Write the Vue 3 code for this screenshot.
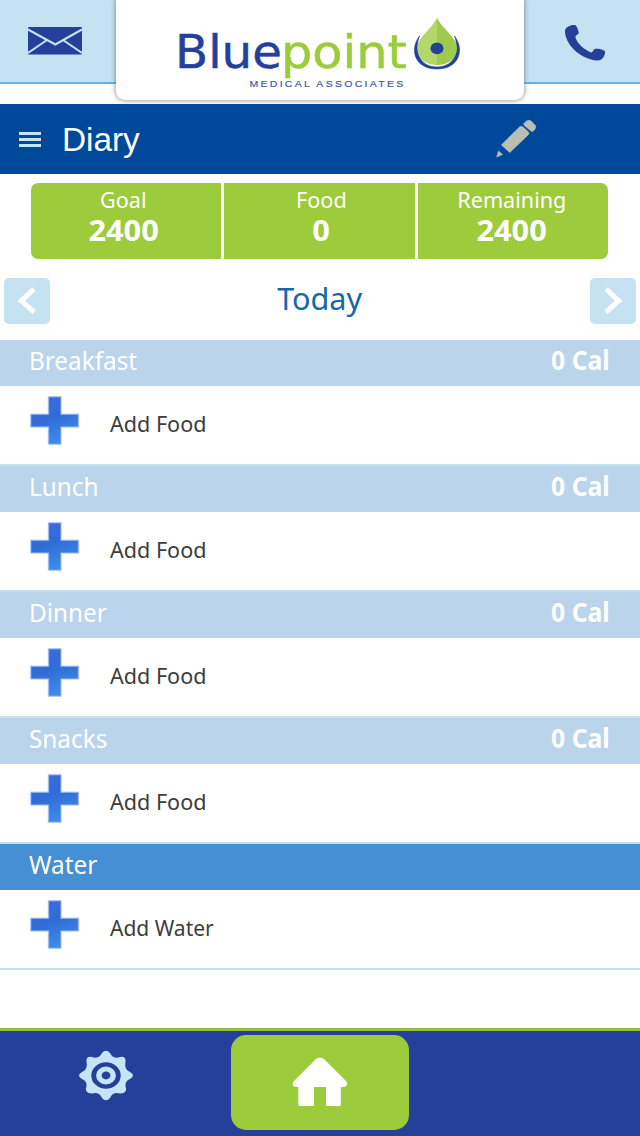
<script setup>
const stats = [
  { label: 'Goal', value: '2400', cls: 'goal' },
  { label: 'Food', value: '0', cls: 'food' },
  { label: 'Remaining', value: '2400', cls: 'remaining' },
]
const meals = [
  { name: 'Breakfast', total: '0 Cal', action: 'Add Food' },
  { name: 'Lunch', total: '0 Cal', action: 'Add Food' },
  { name: 'Dinner', total: '0 Cal', action: 'Add Food' },
  { name: 'Snacks', total: '0 Cal', action: 'Add Food' },
  { name: 'Water', total: '', action: 'Add Water', water: true },
]
</script>

<template>
  <div class="app">
    <header class="brand">
      <div class="side left">
        <svg width="54" height="28" viewBox="0 0 54 28">
          <rect width="54" height="27.5" rx="1" fill="#24409b" />
          <path d="M0 2.5 L27.3 17.5 L54 2.5 M0 26 L19 13 M54 26 L35 13" fill="none" stroke="#c5e2f3" stroke-width="2.1" />
        </svg>
      </div>
      <div class="card">
        <svg width="408" height="100" viewBox="116 0 408 100">
          <text x="175" y="67.7" font-size="47" textLength="107" lengthAdjust="spacingAndGlyphs" fill="#24409b" stroke="#24409b" stroke-width=".5" font-family="DejaVu Sans, sans-serif">Blue</text>
          <text x="281" y="67.7" font-size="47" textLength="126" lengthAdjust="spacingAndGlyphs" fill="#9ccb3b" stroke="#9ccb3b" stroke-width=".5" font-family="DejaVu Sans, sans-serif">point</text>
          <text x="249.5" y="86.8" font-size="8.8" textLength="156" lengthAdjust="spacingAndGlyphs" letter-spacing="1.9" fill="#3d55a5" stroke="#3d55a5" stroke-width=".15" font-family="Liberation Sans, Arial, sans-serif">MEDICAL ASSOCIATES</text>
          <path d="M419.500 36 C409 50 415 69 437 69 C459 69 465 50 454.500 36 C460 50 455 67 437 67 C419 67 414 50 419.500 36Z" fill="#24409b" stroke="#24409b" stroke-width=".6" />
          <path d="M437 17.500 C433 28 417.500 37 417.500 48 C417.500 59 426 65 437 65 Z" fill="#b2d86a" />
          <path d="M437 17.500 C441 28 457 37 457 48 C457 59 448 65 437 65 Z" fill="#9fcb4d" />
          <ellipse cx="437" cy="48.300" rx="6.500" ry="5.900" fill="#24409b" />
        </svg>
      </div>
      <div class="side right">
        <svg width="42" height="38" viewBox="564 24 42 38">
          <path d="M565 31 C565 27.500 570 25 574 25 C576.500 25 577 27 578 30 C579 32.500 579.300 34 577 34.800 C575.500 35.500 575 37 576 39 C579 45 584 49 590 52 C592 53 592.500 52 593.500 50 C595 48 599 48.500 603 50 C605.500 51 605.500 52.500 604.500 55 C603 59 600 61 596 60.500 C579 58 565 44 565 31Z" fill="#24409b" />
        </svg>
      </div>
    </header>

    <nav class="titlebar">
      <span class="menu"><i></i><i></i><i></i></span>
      <h1>Diary</h1>
      <svg class="pencil" width="42" height="40" viewBox="496 120 42 40">
        <g fill="#bdbdb3" stroke="#a9c6ce" stroke-width=".6">
          <path d="M501.300 146 L519.500 128 Q521.300 126.700 523 128 L528.300 132.800 Q529.500 134.300 528.300 135.700 L509.800 153.500 Z" />
          <path d="M524 124.300 L527 121.800 Q529 120.600 531 122 L535.200 126.300 Q536.300 128 535.200 129.700 L533.600 131.800 Q532.200 133 530.800 131.900 L524.300 126.500 Q523.200 125.300 524 124.300Z" />
          <path d="M498.500 152 L502.500 155.500 L496.700 158 Z" />
        </g>
      </svg>
    </nav>

    <section class="stats">
      <div v-for="s in stats" :key="s.label" class="stat" :class="s.cls">
        <span class="label">{{ s.label }}</span>
        <span class="value">{{ s.value }}</span>
      </div>
    </section>

    <section class="day">
      <button class="arrow" aria-label="Previous day">
        <svg width="46" height="46" viewBox="0 0 46 46"><path d="M30 11.200 L17.300 22.700 L30 34.200" fill="none" stroke="#fff" stroke-width="5" /></svg>
      </button>
      <span class="today">Today</span>
      <button class="arrow" aria-label="Next day">
        <svg width="46" height="46" viewBox="0 0 46 46"><path d="M16 11.200 L28.700 22.700 L16 34.200" fill="none" stroke="#fff" stroke-width="5" /></svg>
      </button>
    </section>

    <main>
      <section v-for="m in meals" :key="m.name" class="meal">
        <div class="meal-head" :class="{ water: m.water }">
          <span class="name">{{ m.name }}</span>
          <span class="total">{{ m.total }}</span>
        </div>
        <div class="meal-row">
          <svg class="plus" width="50" height="50" viewBox="0 0 50 50">
            <defs>
              <linearGradient id="plusFill" x1="0" y1="0" x2=".35" y2="1">
                <stop offset="0" stop-color="#3f6cdc" />
                <stop offset=".5" stop-color="#306bd6" />
                <stop offset="1" stop-color="#3d8ae8" />
              </linearGradient>
            </defs>
            <path d="M18.500 .8 H31 V18.300 H48.500 V31 H31 V48.300 H18.500 V31 H.8 V18.300 H18.500 Z" fill="url(#plusFill)" stroke="#9dbdf0" stroke-opacity=".65" stroke-width="1.500" stroke-linejoin="round" />
          </svg>
          <span class="action" :class="{ narrow: m.water }">{{ m.action }}</span>
        </div>
      </section>
    </main>

    <footer class="tabs">
      <div class="tab">
        <svg width="56" height="51" viewBox="-28 -25.500 56 51">
          <g transform="scale(1 .9)">
            <path d="M-4 -25 Q0 -30 4 -25 C6 -20 9 -19 14 -20.500 Q20 -22 19.500 -15 C18.500 -9 20 -6 24 -4 Q30 0 24 4 C20 6 18.500 9 20 14 Q21 20 14 20 C9 18.500 6 20 4 25 Q0 30 -4 25 C-6 20 -9 18.500 -14 20 Q-21 20 -20 14 C-18.500 9 -20 6 -24 4 Q-30 0 -24 -4 C-20 -6 -18.500 -9 -19.500 -15 Q-20 -22 -14 -20.500 C-9 -19 -6 -20 -4 -25Z" fill="#c5e4f5" />
            <circle r="12.300" fill="none" stroke="#24409b" stroke-width="4.800" />
            <circle r="4.400" fill="#24409b" />
          </g>
        </svg>
      </div>
      <div class="tab home">
        <svg width="56" height="50" viewBox="292 1057 56 50">
          <path d="M316 1059 Q320 1056.500 324 1059 L345.500 1080.500 Q348 1083 346.500 1085.500 Q345.500 1087 343 1087 H340.800 V1104.500 Q340.800 1106 339.300 1106 H327.500 Q326 1106 326 1104.500 V1087 H314 V1104.500 Q314 1106 312.500 1106 H300 Q298.300 1106 298.300 1104.500 V1087 H296 Q293.500 1087 292.800 1085 Q292 1083 294.500 1080.500 Z" fill="#fff" />
        </svg>
      </div>
      <div class="tab"></div>
    </footer>
  </div>
</template>

<style>
body { margin: 0; background: #fff; }
</style>

<style scoped>
.app {
  width: 640px;
  height: 1136px;
  display: flex;
  flex-direction: column;
  overflow: hidden;
  background: #fff;
  font-family: "Noto Sans", "Open Sans", sans-serif;
}
svg { display: block; flex: none; }

.brand {
  height: 104px;
  flex: none;
  display: flex;
  align-items: flex-start;
}
.side {
  flex: 1;
  height: 81.500px;
  background: #c5e2f3;
  border-bottom: 2px solid #62b8e0;
  box-sizing: content-box;
}
.side.left svg { margin: 27px 0 0 28px; }
.side.right svg { margin: 24px 0 0 40px; }
.card {
  width: 408px;
  height: 100px;
  background: #fff;
  border-radius: 0 0 9px 9px;
  box-shadow: 0 0 4px 1px rgba(70, 80, 80, 0.5);
  z-index: 1;
}

.titlebar {
  height: 70px;
  flex: none;
  display: flex;
  align-items: center;
  background: #004899;
  z-index: 2;
}
.menu {
  width: 22px;
  margin-left: 19px;
  display: flex;
  flex-direction: column;
  gap: 3px;
}
.menu i { height: 3px; background: #c5e4f8; }
h1 {
  margin: 2px 0 0 21px;
  width: 413px;
  color: #fff;
  font: 400 33px/68px "Liberation Sans", Arial, sans-serif;
  transform: scaleX(1.01);
  transform-origin: left;
}
.pencil { margin-left: 21px; }

.stats {
  flex: none;
  width: 577px;
  height: 76px;
  margin: 9px 0 0 31px;
  display: flex;
  gap: 3px;
  border-radius: 7px;
  overflow: hidden;
}
.stat {
  display: flex;
  flex-direction: column;
  align-items: center;
  background: #9ccb3b;
  color: #fff;
}
.goal { width: 190px; box-sizing: border-box; padding-right: 5px; }
.food { width: 191px; box-sizing: border-box; padding-left: 4px; }
.remaining { width: 190px; box-sizing: border-box; padding-right: 3px; }
.label {
  font-size: 22.500px;
  line-height: 33px;
  transform: scaleX(0.96);
}
.value {
  font-size: 28.500px;
  line-height: 29px;
  font-weight: 700;
  transform: scaleX(1.08);
}

.day {
  flex: none;
  height: 46px;
  margin: 18.500px 4px 16.500px;
  display: flex;
  justify-content: space-between;
}
.arrow {
  width: 46px;
  height: 46px;
  padding: 0;
  border: 0;
  border-radius: 5px;
  background: #c5e2f3;
}
.today {
  color: #1767ab;
  font-size: 30px;
  line-height: 42px;
  transform: scaleX(1.02);
}

.meal { height: 126px; }
.meal-head {
  height: 46px;
  box-sizing: border-box;
  padding: 0 30.500px 6px 29px;
  display: flex;
  align-items: center;
  justify-content: space-between;
  background: #b9d4eb;
  color: #fff;
  font-size: 26px;
  line-height: 40px;
}
.meal-head.water { background: #478fd4; }
.name { transform: scaleX(0.935); transform-origin: left; }
.total { font-weight: 700; transform: scaleX(0.95); transform-origin: right; }
.meal-row {
  height: 80px;
  box-sizing: border-box;
  padding-left: 30px;
  display: flex;
  border-bottom: 2px solid #c5e2ec;
}
.plus { margin-top: 10px; }
.action {
  margin-left: 30px;
  color: #3d3d3d;
  font-size: 22px;
  line-height: 75px;
  transform: scaleX(0.98);
  transform-origin: left;
}
.action.narrow { transform: scaleX(0.955); }

.tabs {
  flex: none;
  height: 108px;
  box-sizing: border-box;
  margin-top: auto;
  border-top: 3px solid #94c23f;
  background: #24409b;
  display: flex;
}
.tab { width: 231px; }
.tab:first-child svg { margin: 19px 0 0 78px; }
.home {
  width: 179px;
  height: 95px;
  margin-top: 4px;
  border-radius: 15px;
  background: #9ccb3b;
}
.home svg { margin: 22px 0 0 61px; }
</style>
